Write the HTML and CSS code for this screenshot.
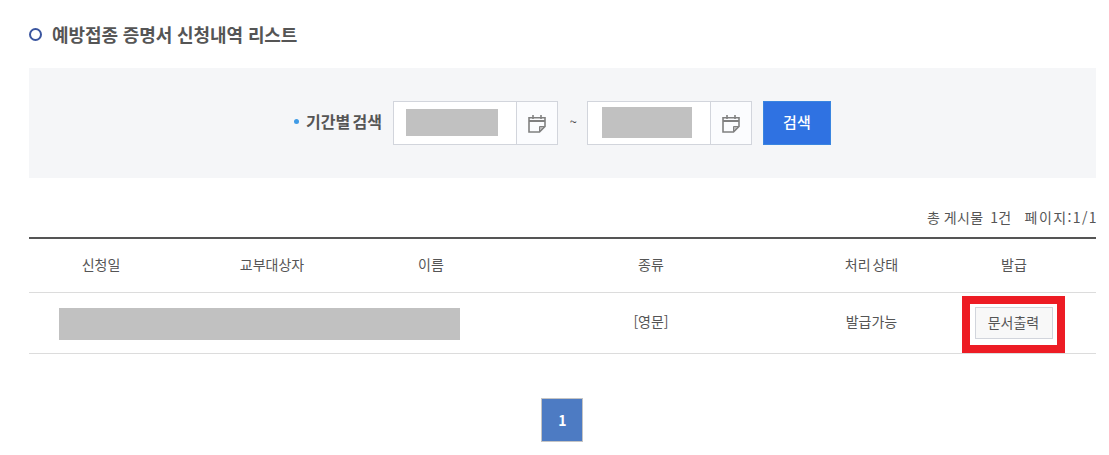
FILE: index.html
```html
<!DOCTYPE html>
<html lang="ko">
<head>
    <meta charset="utf-8">
    <title>예방접종 증명서 신청내역 리스트</title>
    <link rel="stylesheet" href="styles.css">
</head>
<body>
    <div class="content">
        <h2 class="title">예방접종 증명서 신청내역 리스트</h2>

        <div class="search-box">
            <span class="search-label"><span class="search-label-text">기간별 검색</span></span>
            <div class="date-field">
                <div class="date-value"><span class="mask mask-first"></span></div>
                <span class="date-icon">
                    <svg width="18" height="19" viewBox="0 0 18 19" fill="none" stroke="#808080" stroke-width="1.6">
                        <path d="M1 3.8H17V12.5L11.5 18H1Z"/>
                        <path d="M1 7H17" stroke-width="2"/>
                        <path d="M5 1V5M13 1V5"/>
                        <path d="M16.5 12.5H11.5V17.5Z" fill="#b8b8b8" stroke-width="1"/>
                    </svg>
                </span>
            </div>
            <span class="tilde">~</span>
            <div class="date-field">
                <div class="date-value"><span class="mask mask-second"></span></div>
                <span class="date-icon">
                    <svg width="18" height="19" viewBox="0 0 18 19" fill="none" stroke="#808080" stroke-width="1.6">
                        <path d="M1 3.8H17V12.5L11.5 18H1Z"/>
                        <path d="M1 7H17" stroke-width="2"/>
                        <path d="M5 1V5M13 1V5"/>
                        <path d="M16.5 12.5H11.5V17.5Z" fill="#b8b8b8" stroke-width="1"/>
                    </svg>
                </span>
            </div>
            <button class="search-button">검색</button>
        </div>

        <p class="board-info"><span class="board-total">총 게시물&nbsp; 1건</span><span class="board-page">페이지:1/1</span></p>

        <table class="list-table">
            <colgroup>
                <col class="col-date">
                <col class="col-target">
                <col class="col-name">
                <col class="col-kind">
                <col class="col-state">
                <col class="col-issue">
            </colgroup>
            <thead>
                <tr>
                    <th>신청일</th>
                    <th>교부대상자</th>
                    <th>이름</th>
                    <th>종류</th>
                    <th>처리 상태</th>
                    <th>발급</th>
                </tr>
            </thead>
            <tbody>
                <tr>
                    <td colspan="3"><div class="mask mask-row"></div></td>
                    <td class="text-cell">[영문]</td>
                    <td class="text-cell">발급가능</td>
                    <td>
                        <div class="highlight"><button class="print-button">문서출력</button></div>
                    </td>
                </tr>
            </tbody>
        </table>

        <div class="paging"><a class="page-current">1</a></div>
    </div>
</body>
</html>
```

FILE: styles.css
```css
body {
    margin: 0;
    background-color: #fff;
    font-family: "Noto Sans CJK KR", "Noto Sans", sans-serif;
    color: #555;
}

.content {
    width: 1067px;
    margin-left: 29px;
}

.title {
    display: flex;
    align-items: center;
    height: 68px;
    margin: 0;
    font-size: 18px;
    font-weight: 700;
    color: #555;
    letter-spacing: -0.1px;
}

.title::before {
    content: "";
    width: 13px;
    height: 13px;
    margin-right: 10px;
    border: 2px solid #3a559f;
    border-radius: 50%;
    box-sizing: border-box;
}

.search-box {
    display: flex;
    align-items: center;
    justify-content: center;
    height: 110px;
    padding-right: 1px;
    background-color: #f5f6f8;
}

.search-label {
    display: flex;
    align-items: center;
    margin-right: 11px;
    font-size: 16px;
    font-weight: 700;
    word-spacing: -2.3px;
}

.search-label::before {
    content: "";
    width: 5px;
    height: 5px;
    margin: 0 7px 3px 1px;
    border-radius: 50%;
    background-color: #3f9be6;
}

.search-label-text {
    margin-bottom: 4px;
}

.date-field {
    display: flex;
    width: 165px;
    height: 44px;
    box-sizing: border-box;
    border: 1px solid #d2d5dc;
    background-color: #fff;
}

.date-value {
    flex: 1;
}

.date-icon {
    display: flex;
    align-items: center;
    justify-content: center;
    width: 41px;
    padding-left: 1px;
    box-sizing: border-box;
    border-left: 1px solid #d2d5dc;
    background-color: #fbfcfe;
}

.tilde {
    width: 29px;
    margin-bottom: 4px;
    padding-left: 2px;
    box-sizing: border-box;
    text-align: center;
    font-size: 13px;
    color: #444;
}

.mask {
    display: block;
    background-color: #c1c1c1;
}

.mask-first {
    width: 92px;
    height: 27px;
    margin: 7px 0 0 12px;
}

.mask-second {
    width: 90px;
    height: 31px;
    margin: 5px 0 0 14px;
}

.mask-row {
    width: 401px;
    height: 32px;
    margin: 1px 0 0 30px;
}

.search-button {
    width: 68px;
    height: 44px;
    margin-left: 11px;
    padding: 0 0 3px;
    border: 1px solid #3a85e0;
    background-color: #2f72e2;
    color: #fff;
    font-family: inherit;
    font-size: 15px;
    font-weight: 500;
}

.board-info {
    display: flex;
    justify-content: flex-end;
    gap: 13px;
    height: 59px;
    margin: 0 -2px 0 0;
    padding-top: 28px;
    box-sizing: border-box;
    font-size: 14px;
    line-height: 22px;
}

.board-total {
    letter-spacing: 0.4px;
    word-spacing: -1px;
}

.board-page {
    letter-spacing: 1.4px;
}

.list-table {
    width: 100%;
    border-collapse: collapse;
    table-layout: fixed;
    border-top: 2px solid #555;
    font-size: 14px;
}

.col-date { width: 144px; }
.col-target { width: 198px; }
.col-name { width: 120px; }
.col-kind { width: 320px; }
.col-state { width: 121px; }

.list-table th {
    height: 49px;
    padding: 0 0 4px;
    font-weight: 400;
    word-spacing: -2px;
    border-bottom: 1px solid #dcdcdc;
}

.list-table td {
    height: 60px;
    padding: 0;
    text-align: center;
    border-bottom: 1px solid #dcdcdc;
}

.list-table .text-cell {
    height: 56px;
    padding-bottom: 4px;
}

.highlight {
    display: flex;
    align-items: flex-start;
    justify-content: center;
    width: 103px;
    height: 57px;
    margin: 3px 0 0 30px;
    box-sizing: border-box;
    border: 8px solid #ed1c24;
}

.print-button {
    width: 78px;
    height: 32px;
    margin-top: 3px;
    padding: 0 0 3px;
    border: 1px solid #d2d5dc;
    background-color: #f8f8f8;
    color: #555;
    font-family: inherit;
    font-size: 14px;
}

.paging {
    display: flex;
    justify-content: center;
    margin-top: 44px;
    padding-right: 1px;
}

.page-current {
    width: 42px;
    height: 44px;
    box-sizing: border-box;
    border: 1px solid #c4c4c4;
    background-color: #4d7bc3;
    color: #fff;
    font-size: 14px;
    font-weight: 700;
    line-height: 42px;
    text-align: center;
    text-indent: 1px;
}
```
